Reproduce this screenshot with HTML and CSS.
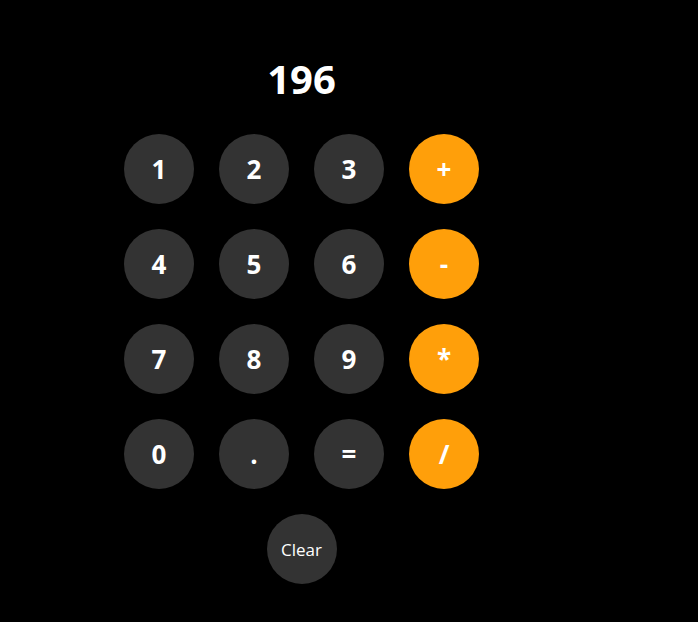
FILE: index.html
```html
<!DOCTYPE html>
<html>
<head>
<meta charset="utf-8">
<link rel="stylesheet" href="styles.css">
</head>
<body>
<div class="calc">
  <div class="display">196</div>
  <div class="keys">
    <button class="key">1</button>
    <button class="key">2</button>
    <button class="key">3</button>
    <button class="key op">+</button>
    <button class="key">4</button>
    <button class="key">5</button>
    <button class="key">6</button>
    <button class="key op">-</button>
    <button class="key">7</button>
    <button class="key">8</button>
    <button class="key">9</button>
    <button class="key op">*</button>
    <button class="key">0</button>
    <button class="key">.</button>
    <button class="key">=</button>
    <button class="key op">/</button>
  </div>
  <button class="key clear">Clear</button>
</div>
</body>
</html>
```
FILE: styles.css
```css
html, body {
  margin: 0;
  background: #000;
  height: 100%;
}
body {
  font-family: "Open Sans", "Liberation Sans", sans-serif;
  color: #fff;
}
.calc {
  width: 603px;
  display: flex;
  flex-direction: column;
  align-items: center;
  padding-top: 52px;
}
.display {
  font-size: 40px;
  font-weight: 700;
  line-height: 54px;
  height: 54px;
  margin-bottom: 28px;
}
.keys {
  display: grid;
  grid-template-columns: repeat(4, 70px);
  gap: 25px;
}
.key {
  width: 70px;
  height: 70px;
  border-radius: 50%;
  border: none;
  padding: 0;
  background: #333333;
  color: #fff;
  font-family: inherit;
  font-size: 26px;
  font-weight: 700;
  display: flex;
  align-items: center;
  justify-content: center;
}
.key.op {
  background: #ff9f0a;
}
.key.clear {
  margin-top: 25px;
  font-size: 17px;
  font-weight: 400;
}
```
